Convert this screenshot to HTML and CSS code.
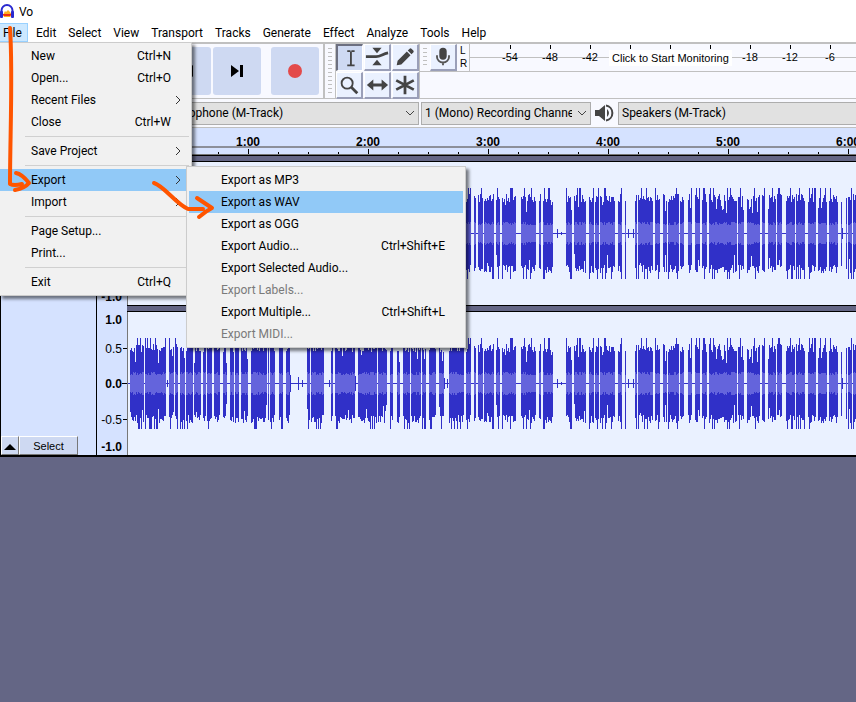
FILE: index.html
```html
<!DOCTYPE html>
<html lang="en">
<head>
    <meta charset="UTF-8">
    <meta name="viewport" content="width=device-width, initial-scale=1.0">
    <title>Vo</title>
    <link rel="stylesheet" href="styles.css">
</head>
<body>
    <header class="titlebar">
        <svg class="logo" width="15" height="18" viewBox="0 0 15 18">
            <path d="M1.500 11V7.500a5.500 5.500 0 0 1 11 0V11" fill="none" stroke="#2a2ad0" stroke-width="2"/>
            <path d="M3 12l2-4 1 1 2-2 2 2 2 3-2 2H4z" fill="#ffb020"/>
            <path d="M2 11h10l-2 2H4z" fill="#f03010"/>
            <rect x="0" y="8" width="3" height="7" rx="1" fill="#2a2ad0"/>
            <rect x="11" y="8" width="3" height="7" rx="1" fill="#2a2ad0"/>
        </svg>
        <span>Vo</span>
    </header>

    <nav class="menubar">
        <button class="open">File</button>
        <button>Edit</button>
        <button>Select</button>
        <button>View</button>
        <button>Transport</button>
        <button>Tracks</button>
        <button>Generate</button>
        <button>Effect</button>
        <button>Analyze</button>
        <button>Tools</button>
        <button>Help</button>
    </nav>

    <div class="toolbars">
        <div class="transport">
            <button aria-label="Pause"><svg width="16" height="16"><path d="M2 2h4v12H2zM10 2h4v12h-4z"/></svg></button>
            <button aria-label="Play"><svg width="16" height="16"><path d="M3 1l11 7-11 7z"/></svg></button>
            <button aria-label="Stop"><svg width="16" height="16"><path d="M2 2h12v12H2z"/></svg></button>
            <button aria-label="Skip to start"><svg width="14" height="14"><path d="M1 1h3v12H1zM13 1v12L5 7z"/></svg></button>
            <button aria-label="Skip to end"><svg width="14" height="14"><path d="M1 1l8 6-8 6zM10 1h3v12h-3z"/></svg></button>
            <button class="record" aria-label="Record"><svg width="14" height="14"><circle cx="7" cy="7" r="7" fill="#e34a4a"/></svg></button>
        </div>
        <div class="grip"></div>
        <div class="tools">
            <button class="pressed" aria-label="Selection tool"><svg viewBox="0 0 26 26"><path d="M10 5.500h3.500M14.500 5.500H18M10 21h8M14 6v15" fill="none" stroke="#444" stroke-width="2"/></svg></button>
            <button aria-label="Envelope tool"><svg viewBox="0 0 26 26"><path d="M8 3h10l-5 6zM13 16l5 6H8z" fill="#444"/><path d="M1 12.500h11c5 0 7-3 13-4" fill="none" stroke="#444" stroke-width="3"/></svg></button>
            <button aria-label="Draw tool"><svg viewBox="0 0 26 26"><path d="M4 22l1-5L15 7l4 4L9 21zM16 6l2-2q1-1 2 0l2 2q1 1 0 2l-2 2z" fill="#444"/></svg></button>
            <button aria-label="Zoom tool"><svg viewBox="0 0 26 26"><circle cx="11" cy="11" r="6" fill="none" stroke="#444" stroke-width="2"/><path d="M15 15l7 7" stroke="#444" stroke-width="3"/></svg></button>
            <button aria-label="Time shift tool"><svg viewBox="0 0 26 26"><path d="M2 13l7-6v4.500h9V7l7 6-7 6v-4.500H9V19z" fill="#444"/></svg></button>
            <button aria-label="Multi tool"><svg viewBox="0 0 26 26"><path d="M13 3v20M3.500 8l19 10M22.500 8l-19 10" stroke="#444" stroke-width="3"/></svg></button>
        </div>
        <div class="right-bars">
            <div class="meter-bar">
                <div class="grip short"></div>
                <button class="tool" aria-label="Recording meter"><svg viewBox="0 0 26 26"><rect x="9" y="3" width="8" height="13" rx="4" fill="#444"/><path d="M6.500 11v2a6.500 6 0 0 0 13 0v-2M13 19v3" fill="none" stroke="#555" stroke-width="2"/></svg></button>
                <div class="channels"><span>L</span><span>R</span></div>
                <div class="meter">
                    <div class="marks">
                        <span>-54</span><span>-48</span><span>-42</span><span></span><span></span><span></span><span>-18</span><span>-12</span><span>-6</span>
                    </div>
                    <button class="monitor">Click to Start Monitoring</button>
                </div>
            </div>
        </div>
    </div>

    <div class="devices">
        <div class="picker host">
            <select aria-label="Audio host"><option>MME</option></select>
            <svg width="10" height="6"><path d="M1 1l4 4 4-4"/></svg>
        </div>
        <div class="picker mic">
            <select aria-label="Recording device"><option>Microphone (M-Track)</option></select>
            <svg width="10" height="6"><path d="M1 1l4 4 4-4"/></svg>
        </div>
        <div class="picker channel">
            <select aria-label="Recording channels"><option>1 (Mono) Recording Channel</option></select>
            <svg width="10" height="6"><path d="M1 1l4 4 4-4"/></svg>
        </div>
        <svg class="speaker" width="19" height="20" viewBox="0 0 19 20">
            <path d="M0 7h4l6-5v16l-6-5H0z" fill="#444"/>
            <path d="M12 6q4 4 0 8z" fill="#444"/>
            <path d="M11 2.500a7.600 7.600 0 0 1 0 15" fill="none" stroke="#444" stroke-width="2"/>
        </svg>
        <div class="picker output">
            <select aria-label="Playback device"><option>Speakers (M-Track)</option></select>
            <svg width="10" height="6"><path d="M1 1l4 4 4-4"/></svg>
        </div>
    </div>

    <div class="ruler">
        <div class="times">
            <span>1:00</span><span>2:00</span><span>3:00</span><span>4:00</span><span>5:00</span><span>6:00</span>
        </div>
        <div class="ticks"></div>
    </div>

    <main class="project">
        <aside class="panel">
            <div class="panel-buttons">
                <button class="collapse" aria-label="Collapse"><svg width="12" height="6"><path d="M0 6l6-6 6 6z"/></svg></button>
                <button class="select">Select</button>
            </div>
        </aside>
        <div class="channels-area">
            <div class="track">
                <div class="scale"><b>1.0</b><span>0.5</span><b>0.0</b><span>-0.5</span><b>-1.0</b></div>
                <svg class="wave"></svg>
            </div>
            <div class="divider"></div>
            <div class="track">
                <div class="scale"><b>1.0</b><span>0.5</span><b>0.0</b><span>-0.5</span><b>-1.0</b></div>
                <svg class="wave"></svg>
            </div>
        </div>
    </main>

    <!-- File menu -->
    <div class="menu file-menu">
        <button>New<kbd>Ctrl+N</kbd></button>
        <button>Open...<kbd>Ctrl+O</kbd></button>
        <button>Recent Files<svg width="6" height="10"><path d="M1 1l4 4-4 4"/></svg></button>
        <button>Close<kbd>Ctrl+W</kbd></button>
        <hr>
        <button>Save Project<svg width="6" height="10"><path d="M1 1l4 4-4 4"/></svg></button>
        <hr>
        <button class="active">Export<svg width="6" height="10"><path d="M1 1l4 4-4 4"/></svg></button>
        <button>Import<svg width="6" height="10"><path d="M1 1l4 4-4 4"/></svg></button>
        <hr>
        <button>Page Setup...</button>
        <button>Print...</button>
        <hr>
        <button>Exit<kbd>Ctrl+Q</kbd></button>
    </div>

    <!-- Export submenu -->
    <div class="menu export-menu">
        <button>Export as MP3</button>
        <button class="active">Export as WAV</button>
        <button>Export as OGG</button>
        <button>Export Audio...<kbd>Ctrl+Shift+E</kbd></button>
        <button>Export Selected Audio...</button>
        <button disabled>Export Labels...</button>
        <button>Export Multiple...<kbd>Ctrl+Shift+L</kbd></button>
        <button disabled>Export MIDI...</button>
    </div>

    <!-- hand drawn arrows -->
    <svg class="arrows" width="240" height="230">
        <path d="M10 28C13 70 10 140 10 184Q14 186 22 184M16 173Q22 174 29 183Q25 188 15 190"/>
        <path d="M154 183C164 186 176 204 188 209H203M197 198L212 208Q206 211 199 217"/>
    </svg>

    <script src="wave.js"></script>
</body>
</html>
```
FILE: styles.css
```css
* {
    box-sizing: border-box;
}
body {
    margin: 0;
    min-height: 100vh;
    background: #646685;
    color: #000;
    font-family: Roboto, "Open Sans", sans-serif;
    font-size: 12px;
    line-height: 16px;
    overflow: hidden;
}
button, select, kbd {
    font: inherit;
    color: inherit;
}
button {
    margin: 0;
    padding: 0;
    border: 0;
    background: none;
}

/* title and menu bar */
.titlebar {
    display: flex;
    align-items: center;
    gap: 4px;
    height: 23px;
    background: #fff;
}
.menubar {
    display: flex;
    height: 19px;
    background: #fff;
}
.menubar button {
    padding: 0 6px;
    white-space: nowrap;
}
.menubar .open {
    width: 28px;
    margin-right: 2px;
    padding: 0 3px;
    background: #cce8ff;
    border: 1px solid #99d1ff;
    border-left: 0;
    text-align: left;
}

/* toolbars */
.toolbars {
    display: flex;
    height: 57px;
    border-top: 2px solid #c0c0c0;
    border-bottom: 1px solid #c0c0c0;
    background: #f8f9ff;
}
.transport {
    display: flex;
    flex: none;
    align-items: center;
    gap: 2px;
    width: 325px;
    padding-left: 13px;
    border-right: 2px solid #c0c0c0;
}
.transport button {
    display: flex;
    align-items: center;
    justify-content: center;
    width: 48px;
    height: 48px;
    border-radius: 3px;
    background: #ced9f2;
}
.transport .record {
    margin-left: 8px;
}
.grip {
    flex: none;
    width: 10px;
    margin: 4px 0;
    border: solid #f8f9ff;
    border-width: 0 3px;
    background: repeating-linear-gradient(#c0c0c0 0 1px, transparent 1px 4px);
}
.tools {
    display: grid;
    grid-template-columns: repeat(3, 27px);
    grid-auto-rows: 27px;
    gap: 1px;
    border-left: 1px solid #c0c0c0;
}
.tools button, .tool {
    flex: none;
    width: 27px;
    height: 27px;
    background: #eaf1ff;
    border: solid;
    border-width: 1px 2px 2px 1px;
    border-color: #fff #9a9fb8 #9a9fb8 #fff;
}
.tools svg, .tool svg {
    display: block;
    width: 100%;
    height: 100%;
}
.tools .pressed {
    background: #ced9f2;
    border-color: #6c6f80 #fff #fff #6c6f80;
    border-width: 2px 1px 1px 2px;
}
.right-bars {
    flex: 1;
    min-width: 0;
    border-left: 1px solid #c0c0c0;
}
.meter-bar {
    display: flex;
    height: 28px;
    border-bottom: 1px solid #c0c0c0;
}
.channels {
    display: flex;
    flex: none;
    flex-direction: column;
    width: 12px;
    padding-left: 3px;
    font: 10px/13px "Liberation Sans", sans-serif;
}
.meter {
    position: relative;
    flex: 1;
    min-width: 0;
    overflow: hidden;
    border-left: 1px solid #c0c0c0;
    background: linear-gradient(#c0c0c0, #c0c0c0) 0 13px / 100% 1px no-repeat;
}
.marks {
    display: flex;
    padding-left: 20px;
    font: 11px/16px "Liberation Sans", sans-serif;
}
.marks span {
    flex: none;
    width: 40px;
    height: 22px;
    padding-top: 5px;
    background: linear-gradient(#000, #000) 50% 1px / 1px 4px no-repeat;
    text-align: center;
}
.monitor {
    position: absolute;
    top: 6px;
    left: 139px;
    height: 16px;
    padding: 0 3px;
    background: #fff;
    font: 11px/16px "Liberation Sans", sans-serif;
    white-space: nowrap;
}

/* device row */
.devices {
    display: flex;
    align-items: center;
    gap: 2px;
    height: 29px;
    padding-left: 12px;
    border-bottom: 1px solid #c0c0c0;
    background: #f8f9ff;
}
.picker {
    display: grid;
    flex: none;
    align-items: center;
}
.picker select, .picker svg {
    grid-area: 1 / 1;
}
.picker select {
    width: 100%;
    height: 23px;
    padding: 0 18px 0 3px;
    border: 1px solid #adadad;
    border-radius: 0;
    background: #e1e1e1;
    appearance: none;
}
.picker svg {
    justify-self: end;
    margin-right: 4px;
    fill: none;
    stroke: #444;
    pointer-events: none;
}
.host {
    width: 147px;
}
.mic {
    width: 258px;
}
.channel {
    width: 170px;
}
.speaker {
    flex: none;
    margin: 0 2px;
}
.output {
    flex: 1;
    min-width: 260px;
}

/* timeline */
.ruler {
    height: 34px;
    border-bottom: 1px solid #000;
    background: linear-gradient(#d5e2ff 27px, #000 27px 28px, #646685 28px);
    overflow: hidden;
}
.times {
    display: flex;
    height: 20px;
    padding: 6px 0 0 188px;
    border-bottom: 2px solid #8c8f9a;
    font: bold 12px/16px "Liberation Sans", sans-serif;
}
.times span {
    flex: none;
    width: 120px;
    text-align: center;
}
.ticks {
    height: 7px;
    background:
        linear-gradient(90deg, #000 1px, transparent 1px) 8px 1px / 120px 6px repeat-x,
        linear-gradient(90deg, #000 1px, transparent 1px) 8px 4px / 30px 3px repeat-x;
    border-bottom: 1px solid #777;
}

/* tracks */
.project {
    display: flex;
    border-left: 1px solid #000;
    border-bottom: 2px solid #000;
}
.panel {
    display: flex;
    flex: none;
    flex-direction: column;
    justify-content: flex-end;
    width: 96px;
    border-right: 1px solid #000;
    background: #d5e2ff;
}
.panel-buttons {
    display: flex;
    height: 19px;
}
.panel-buttons button {
    border: 1px solid #fff;
    border-right-color: #777;
    border-bottom-color: #777;
    background: #ced9f2;
    font-family: "Liberation Sans", sans-serif;
    font-size: 11px;
}
.collapse {
    width: 18px;
}
.select {
    width: 59px;
}
.channels-area {
    flex: 1;
    min-width: 0;
}
.track {
    display: flex;
    height: 143px;
    background: #eaf1ff;
}
.scale {
    display: grid;
    flex: none;
    grid-template-rows: 16px 42px 28px 44px 10px;
    align-items: center;
    width: 31px;
    padding-right: 5px;
    border-right: 1px solid #777;
    background:
        linear-gradient(#000, #000) 100% 36px / 4px 1px no-repeat,
        linear-gradient(#000, #000) 100% 71px / 5px 1px no-repeat,
        linear-gradient(#000, #000) 100% 107px / 4px 1px no-repeat,
        #d5e2ff;
    font: 12px/14px "Liberation Sans", sans-serif;
    text-align: right;
}
.divider {
    height: 7px;
    margin-left: 30px;
    border: solid #000;
    border-width: 1px 0;
    background: #646685;
    box-shadow: -30px 0 #d5e2ff;
}
.wave {
    flex: 1;
    min-width: 0;
    height: 143px;
    shape-rendering: crispEdges;
}
.peak {
    stroke: #3030c8;
}
.rms {
    stroke: #6464dc;
}

/* popup menus */
.menu {
    position: absolute;
    display: flex;
    flex-direction: column;
    padding: 2px;
    border: 1px solid #ccc;
    background: #f1f1f1;
    box-shadow: 3px 3px 3px rgba(0, 0, 0, 0.5);
}
.menu button {
    display: flex;
    align-items: center;
    justify-content: space-between;
    height: 22px;
    white-space: nowrap;
}
.menu button:disabled {
    color: #7a7a7a;
}
.menu .active {
    background: #91c9f7;
}
.menu svg {
    margin-right: -10px;
    fill: none;
    stroke: #333;
}
.menu hr {
    width: calc(100% - 25px);
    height: 1px;
    margin: 3px 0 3px 25px;
    border: 0;
    background: #d0d0d0;
}
.file-menu {
    top: 42px;
    left: -1px;
    width: 193px;
    padding-left: 0;
}
.file-menu button {
    padding: 0 18px 0 31px;
}
.export-menu {
    top: 166px;
    left: 186px;
    width: 280px;
}
.export-menu button {
    padding: 0 18px 0 32px;
}
.arrows {
    position: absolute;
    top: 0;
    left: 0;
    fill: none;
    stroke: #ff5500;
    stroke-width: 4;
    stroke-linecap: round;
    stroke-linejoin: round;
    pointer-events: none;
}
```
FILE: wave.js
```js
// bursts of speech as [start, end] in pixels from the left of the track
const bursts = [
    [2, 16], [17, 38], [41, 46], [47, 50], [52, 57], [58, 65], [66, 73], [75, 78], [79, 84],
    [86, 92], [95, 99], [102, 106], [107, 111], [113, 120], [123, 139], [140, 141], [142, 147],
    [151, 155], [158, 162], [179, 182], [183, 196], [203, 205], [207, 227], [230, 249],
    [250, 259], [262, 265], [269, 272], [275, 282], [283, 293], [294, 298], [301, 308],
    [311, 316], [321, 336], [338, 343], [346, 348], [350, 355], [356, 366], [368, 372],
    [374, 388], [393, 408], [411, 413], [415, 425], [438, 444], [446, 458], [461, 466],
    [467, 471], [472, 487], [490, 494], [497, 498], [507, 509], [510, 525], [527, 532],
    [535, 539], [540, 551], [552, 556], [560, 564], [567, 572], [574, 579], [581, 609],
    [610, 616], [619, 632], [634, 637], [640, 648], [649, 654], [658, 667], [668, 677],
    [680, 688], [690, 699], [701, 710], [713, 714], [718, 719], [720, 724], [725, 740]
];
// short clicks between them as [x, height]
const clicks = [
    [39, 3], [162, 8], [170, 6], [174, 3], [201, 3], [227, 7], [316, 5], [319, 4], [429, 4],
    [433, 1], [500, 4], [505, 4], [714, 5]
];

let seed = 11;
function random() {
    seed = (seed * 16807) % 2147483647;
    return seed / 2147483647;
}

function height() {
    const r = random();
    if (r > 0.82) return 45;
    if (r < 0.06) return 20 + Math.floor(random() * 10);
    return 31 + Math.floor(random() * 9);
}

const middle = 71;
let peak = 'M0 71.5H2000';
let rms = '';

bursts.forEach(([start, end]) => {
    for (let x = start; x < end; x++) {
        const inner = 8 + Math.floor(random() * 4);
        peak += `M${x + 0.5} ${middle - height()}V${middle + height() + 1}`;
        rms += `M${x + 0.5} ${middle - inner}V${middle + inner + 1}`;
    }
});
clicks.forEach(([x, h]) => {
    peak += `M${x + 0.5} ${middle - h}v${h * 2 + 1}`;
});

document.querySelectorAll('.wave').forEach(wave => {
    wave.innerHTML = `<path class="peak" d="${peak}"/><path class="rms" d="${rms}"/>`;
});
```
